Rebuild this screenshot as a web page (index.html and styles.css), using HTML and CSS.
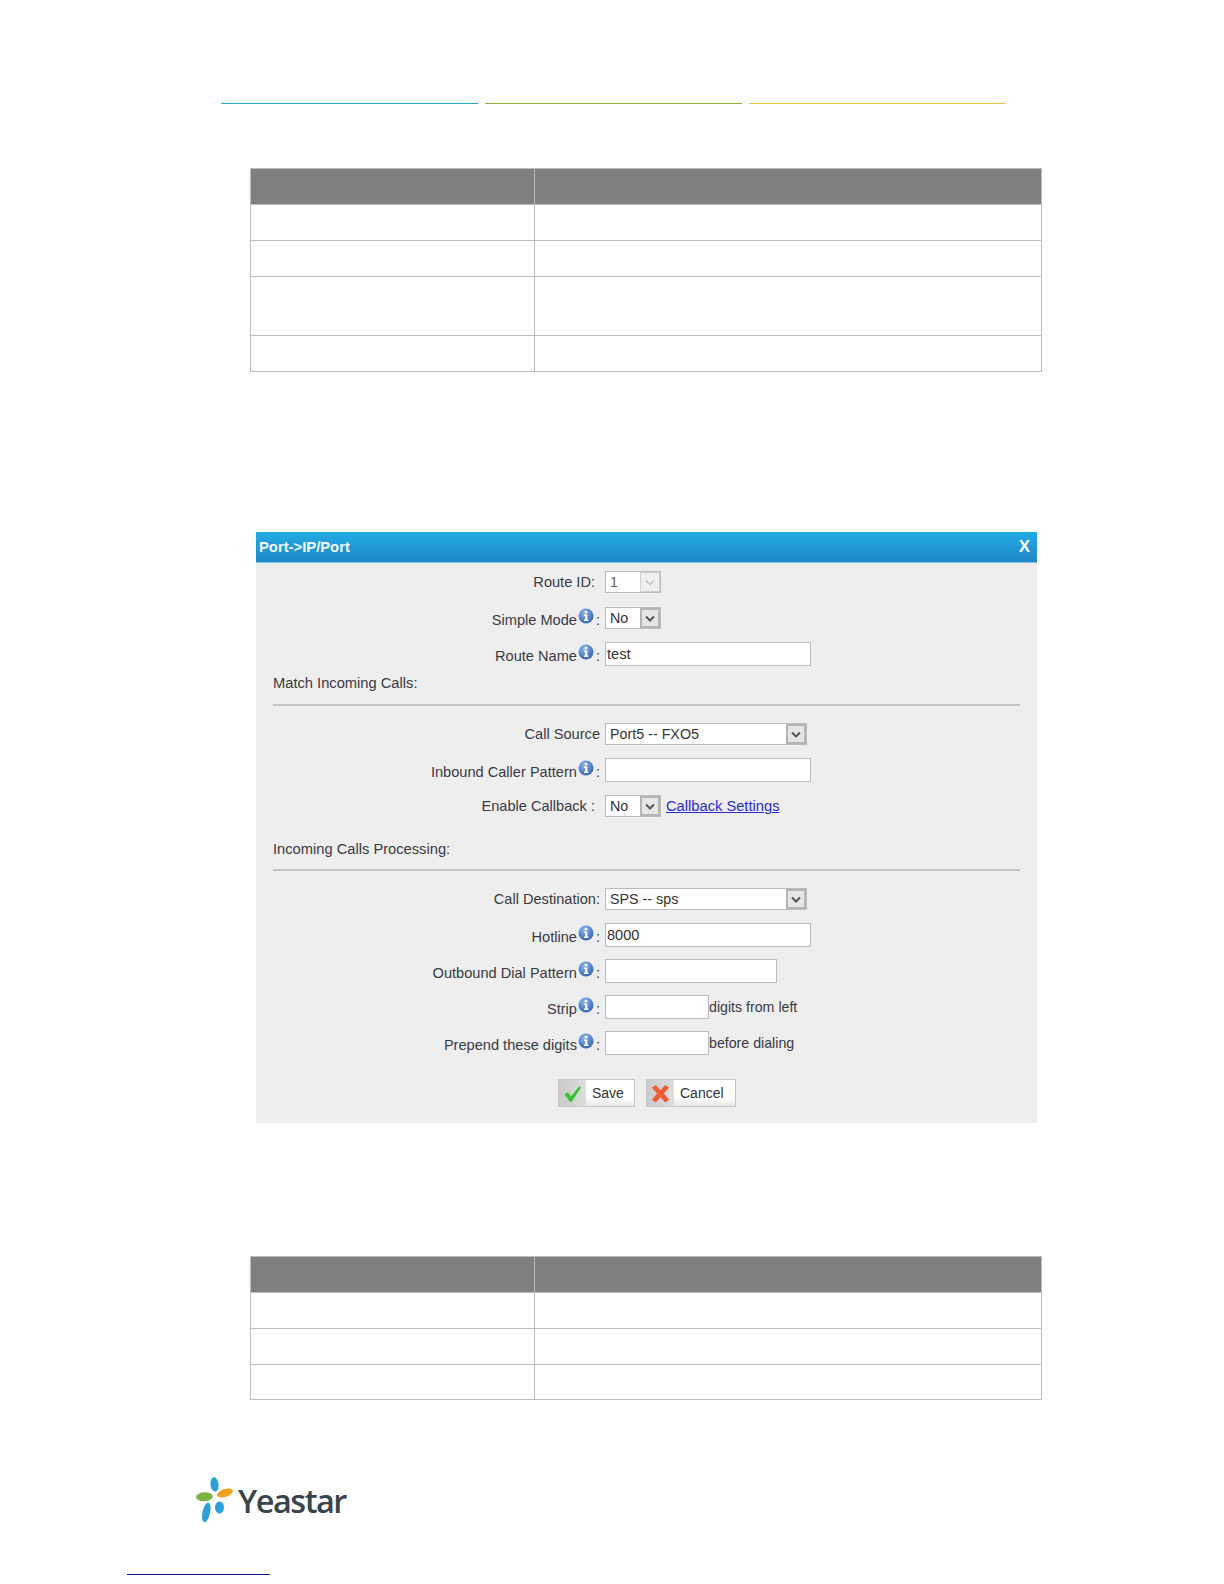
FILE: index.html
```html
<!DOCTYPE html>
<html lang="en">
<head>
<meta charset="utf-8">
<title>Port to IP/Port route</title>
<link rel="stylesheet" href="styles.css">
</head>
<body>
<div class="page">
  <div class="rules">
    <span class="rule rule-blue"></span>
    <span class="rule rule-green"></span>
    <span class="rule rule-yellow"></span>
  </div>

  <table class="spec spec-top">
    <tr class="head"><th></th><th></th></tr>
    <tr><td></td><td></td></tr>
    <tr><td></td><td></td></tr>
    <tr class="tall"><td></td><td></td></tr>
    <tr><td></td><td></td></tr>
  </table>

  <section class="dialog">
    <header class="title"><span>Port-&gt;IP/Port</span><span class="close">X</span></header>
    <div class="body">
      <div class="row"><label class="lbl lbl-gap">Route ID:</label>
        <div class="field"><span class="select sel-short disabled"><span class="val">1</span><span class="arrow"><svg viewBox="0 0 10 7"><path d="M1 1.5 5 5.5 9 1.5"/></svg></span></span></div></div>
      <div class="row"><label class="lbl lbl-info">Simple Mode<svg class="info" viewBox="0 0 16 16"><use href="#i"/></svg>:</label>
        <div class="field"><span class="select sel-short"><span class="val">No</span><span class="arrow"><svg viewBox="0 0 10 7"><path d="M1 1.5 5 5.5 9 1.5"/></svg></span></span></div></div>
      <div class="row"><label class="lbl lbl-info">Route Name<svg class="info" viewBox="0 0 16 16"><use href="#i"/></svg>:</label>
        <div class="field"><span class="input in-long">test</span></div></div>

      <div class="group">Match Incoming Calls:</div>
      <hr class="sep sep-a">

      <div class="row"><label class="lbl">Call Source</label>
        <div class="field"><span class="select sel-long"><span class="val">Port5 -- FXO5</span><span class="arrow"><svg viewBox="0 0 10 7"><path d="M1 1.5 5 5.5 9 1.5"/></svg></span></span></div></div>
      <div class="row"><label class="lbl lbl-info">Inbound Caller Pattern<svg class="info" viewBox="0 0 16 16"><use href="#i"/></svg>:</label>
        <div class="field"><span class="input in-long"></span></div></div>
      <div class="row"><label class="lbl lbl-gap">Enable Callback :</label>
        <div class="field"><span class="select sel-short"><span class="val">No</span><span class="arrow"><svg viewBox="0 0 10 7"><path d="M1 1.5 5 5.5 9 1.5"/></svg></span></span><a class="link" href="#">Callback Settings</a></div></div>

      <div class="group group-b">Incoming Calls Processing:</div>
      <hr class="sep sep-b">

      <div class="row"><label class="lbl">Call Destination:</label>
        <div class="field"><span class="select sel-long"><span class="val">SPS -- sps</span><span class="arrow"><svg viewBox="0 0 10 7"><path d="M1 1.5 5 5.5 9 1.5"/></svg></span></span></div></div>
      <div class="row"><label class="lbl lbl-info">Hotline<svg class="info" viewBox="0 0 16 16"><use href="#i"/></svg>:</label>
        <div class="field"><span class="input in-long">8000</span></div></div>
      <div class="row"><label class="lbl lbl-info">Outbound Dial Pattern<svg class="info" viewBox="0 0 16 16"><use href="#i"/></svg>:</label>
        <div class="field"><span class="input in-mid"></span></div></div>
      <div class="row"><label class="lbl lbl-info">Strip<svg class="info" viewBox="0 0 16 16"><use href="#i"/></svg>:</label>
        <div class="field field-tight"><span class="input in-short"></span><span>digits from left</span></div></div>
      <div class="row"><label class="lbl lbl-info">Prepend these digits<svg class="info" viewBox="0 0 16 16"><use href="#i"/></svg>:</label>
        <div class="field field-tight"><span class="input in-short"></span><span>before dialing</span></div></div>

      <div class="actions">
        <button class="btn btn-save" type="button"><span class="ico"><svg viewBox="0 0 22 22"><path class="check" d="M2.5 12 6 9.5 9.5 14 18 3.5 20 5 10 20 8.500 20Z"/></svg></span><span class="cap">Save</span></button>
        <button class="btn btn-cancel" type="button"><span class="ico"><svg viewBox="0 0 22 22"><path class="cross" d="M2 5 6 2 11 7.500 16 2 20 5 14.500 11 20 17.500 16 20.500 11 15 6 20.500 2 17.500 7.500 11Z"/></svg></span><span class="cap">Cancel</span></button>
      </div>
    </div>
  </section>

  <table class="spec spec-bottom">
    <tr class="head"><th></th><th></th></tr>
    <tr><td></td><td></td></tr>
    <tr><td></td><td></td></tr>
    <tr class="short"><td></td><td></td></tr>
  </table>

  <div class="brand">
    <svg class="mark" viewBox="0 0 40 46">
      <ellipse class="m-blue" cx="18.500" cy="7.500" rx="4" ry="7.200" transform="rotate(-6 18.500 7.500)"/>
      <ellipse class="m-green" cx="8.400" cy="19.700" rx="8.400" ry="4.400" transform="rotate(-4 8.400 19.700)"/>
      <ellipse class="m-orange" cx="29" cy="16" rx="8.300" ry="3.900" transform="rotate(-18 29 16)"/>
      <ellipse class="m-blue" cx="23.500" cy="30.500" rx="4.500" ry="6"/>
      <ellipse class="m-blue" cx="10.300" cy="35.500" rx="3.800" ry="10" transform="rotate(12 10.300 35.500)"/>
    </svg>
    <span class="word">Yeastar</span>
  </div>
  <div class="foot-rule"></div>
</div>

<svg class="defs" aria-hidden="true">
  <defs>
    <radialGradient id="ig" cx="40%" cy="30%" r="75%">
      <stop offset="0" stop-color="#8fb4ea"/>
      <stop offset="1" stop-color="#2f62bd"/>
    </radialGradient>
    <g id="i">
      <circle cx="8" cy="8" r="7.500" fill="url(#ig)"/>
      <rect x="6.800" y="2.800" width="2.500" height="2.400" fill="#fff"/>
      <path d="M6 6.500h3.300v5H10.500v1.500H6v-1.500h1.200V8H6Z" fill="#fff"/>
    </g>
  </defs>
</svg>
</body>
</html>
```

FILE: styles.css
```css
* { box-sizing: border-box; }
html, body { margin: 0; padding: 0; background: #fff; }
body { font-family: "Liberation Sans", Arial, sans-serif; color: #333; }
.page { width: 1224px; height: 1584px; overflow: hidden; padding-top: 103px; }

.rules { display: flex; gap: 7px; margin-left: 221px; }
.rule { width: 257px; height: 1px; }
.rule-blue { background: #2aa6d8; }
.rule-green { background: #8fb339; }
.rule-yellow { background: #f0c548; }

.spec { border-collapse: collapse; table-layout: fixed; width: 792px; margin-left: 250px; }
.spec th, .spec td { border: 1px solid #bdbdbd; padding: 0; height: 36px; }
.spec th:first-child, .spec td:first-child { width: 284px; }
.spec th { background: #7f7f7f; height: 36px; }
.spec .tall td { height: 59px; }
.spec .short td { height: 35px; }
.spec-top { margin-top: 64px; }
.spec-bottom { margin-top: 133px; }

.dialog { width: 781px; margin: 160px 0 0 256px; background: #eeeeee; }
.title { height: 31px; display: flex; justify-content: space-between; align-items: center; padding: 0 7px 0 3px;
  background: linear-gradient(#23abe3, #2088c6); border-bottom: 1px solid #7cc0e6; color: #f2f8fc; font-size: 14.800px; font-weight: bold; }
.close { font-size: 17px; color: #fff; }
.body { padding-top: 1px; height: 560px; font-size: 14.600px; }

.row { display: grid; grid-template-columns: 344px 1fr; column-gap: 5px; height: 36px; align-items: center; }
.lbl { display: flex; justify-content: flex-end; align-items: center; color: #3a3a44; white-space: nowrap; }
.lbl-info { padding-top: 3px; }
.lbl-gap { padding-right: 5px; }
.info { width: 16px; height: 16px; margin: -8px 2px 0 1px; }
.field { display: flex; align-items: center; gap: 5px; }
.field-tight { gap: 0; color: #3a3a44; font-size: 14.200px; }

.select { display: flex; height: 22px; background: #fff; border: 1px solid #bcbcbc; align-items: stretch; color: #333; font-size: 14.300px; }
.val { flex: 1; padding-left: 4px; line-height: 20px; }
.arrow { width: 20px; background: #e6e6e6; border: 2px solid #b4b4b4; display: flex; align-items: center; justify-content: center; }
.arrow svg { width: 10px; height: 7px; }
.arrow path { fill: none; stroke: #555; stroke-width: 2; }
.disabled { color: #666; }
.disabled .arrow { background: #efefef; border: 1px solid #cfcfcf; }
.disabled .arrow path { stroke: #bdbdbd; stroke-width: 1.500; }
.sel-short { width: 56px; }
.sel-long { width: 202px; }

.input { display: block; height: 24px; line-height: 22px; background: #fff; border: 1px solid #bdbdbd; padding-left: 1px; color: #333; font-size: 14.600px; }
.in-long { width: 206px; }
.in-mid { width: 172px; }
.in-short { width: 104px; }

.link { color: #2a2ad6; text-decoration: underline; font-size: 14.700px; }

.group { margin: 2px 0 0 17px; height: 18px; line-height: 18px; color: #3a3a44; font-size: 14.700px; }
.group-b { margin-top: 16px; }
.sep { margin: 0 17px; border: 0; height: 2px; background: #c4c4c4; }
.sep-a { margin-top: 12px; margin-bottom: 10px; }
.sep-b { margin-top: 11px; margin-bottom: 10px; }

.actions { display: flex; margin: 18px 0 0 302px; gap: 11px; }
.btn { display: flex; align-items: stretch; height: 28px; padding: 0; border: 1px solid #c6c6c6; background: linear-gradient(#fff 70%, #e6e6e6); font: inherit; font-size: 14px; color: #333; }
.btn-save { width: 77px; }
.btn-cancel { width: 90px; }
.ico { width: 27px; background: linear-gradient(90deg, #cacaca, #dedede); display: flex; align-items: center; justify-content: center; }
.ico svg { width: 21px; height: 21px; }
.check { fill: #3fc23a; }
.cross { fill: #ee5a33; }
.cap { padding-left: 6px; line-height: 26px; }

.brand { display: flex; align-items: center; margin: 77px 0 0 196px; height: 46px; gap: 2px; }
.mark { width: 40px; height: 46px; }
.m-blue { fill: #2a9fdc; }
.m-green { fill: #7cb342; }
.m-orange { fill: #f0a31f; }
.word { font-family: "Open Sans", sans-serif; font-weight: 600; font-size: 32.500px; letter-spacing: -1.500px; color: #3a444b; line-height: 46px; margin-top: 2px; }
.foot-rule { width: 143px; height: 1px; background: #14148c; margin: 51px 0 0 127px; }

.defs { position: absolute; width: 0; height: 0; }
```
